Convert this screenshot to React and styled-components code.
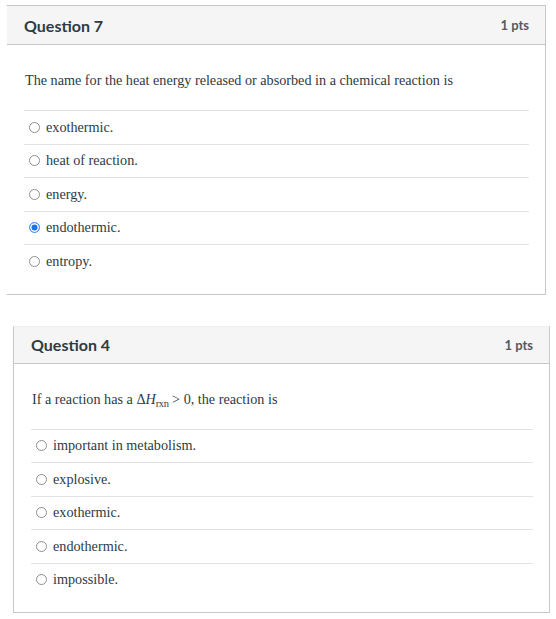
import React from 'react'
import styled, { createGlobalStyle } from 'styled-components'

const GlobalStyle = createGlobalStyle`
  body {
    margin: 0;
    background: #fff;
  }
`

const questions = [
  {
    id: 7,
    offset: 6,
    width: 540,
    headerHeight: 39,
    hideLeft: true,
    text: 'The name for the heat energy released or absorbed in a chemical reaction is',
    answers: ['exothermic.', 'heat of reaction.', 'energy.', 'endothermic.', 'entropy.'],
    selected: 3,
  },
  {
    id: 4,
    offset: 13,
    width: 537,
    headerHeight: 37,
    hideTop: true,
    formula: true,
    answers: ['important in metabolism.', 'explosive.', 'exothermic.', 'endothermic.', 'impossible.'],
    selected: -1,
  },
]

const App = () => {
  return (
    <Page>
      <GlobalStyle />
      {questions.map(q => (
        <Card key={q.id} $offset={q.offset} $width={q.width} $hideLeft={q.hideLeft} $hideTop={q.hideTop}>
          <Header $height={q.headerHeight}>
            <Title>Question {q.id}</Title>
            <Points>1 pts</Points>
          </Header>
          <Body>
            <Prompt>
              {q.formula ? (
                <>
                  If a reaction has a Δ<Italic>H</Italic><Sub>rxn</Sub> &gt; 0, the reaction is
                </>
              ) : q.text}
            </Prompt>
            <Answers>
              {q.answers.map((a, i) => (
                <Answer key={a}>
                  <Radio $checked={i === q.selected} />
                  <span>{a}</span>
                </Answer>
              ))}
            </Answers>
          </Body>
        </Card>
      ))}
    </Page>
  )
}

export default App

const Page = styled.div`
  display: flex;
  flex-direction: column;
  gap: 31px;
  padding-top: 5px;
  width: 556px;
`

const Card = styled.div`
  margin-left: ${p => p.$offset}px;
  width: ${p => p.$width}px;
  box-sizing: border-box;
  border: 1px solid #c4c8cb;
  border-left-color: ${p => (p.$hideLeft ? 'transparent' : '#c4c8cb')};
  border-top-color: ${p => (p.$hideTop ? '#eeeeee' : '#c4c8cb')};
  background: #fff;
`

const Header = styled.div`
  height: ${p => p.$height}px;
  box-sizing: border-box;
  display: flex;
  align-items: center;
  justify-content: space-between;
  padding: 0 16px 0 17px;
  background: #f5f5f5;
  border-bottom: 1px solid #c4c8cb;
`

const Title = styled.div`
  font-family: Lato, "Noto Sans", sans-serif;
  font-weight: 700;
  font-size: 16px;
  color: #2d3b45;
`

const Points = styled.div`
  font-family: Lato, "Noto Sans", sans-serif;
  font-weight: 700;
  font-size: 13px;
  color: #555a5f;
`

const Body = styled.div`
  padding: 0 16px 16px 17px;
`

const Prompt = styled.div`
  font-family: "Liberation Serif", serif;
  font-size: 14.2px;
  line-height: 16px;
  color: #2d3b45;
  padding: 27px 1px 22px;
`

const Italic = styled.i`
  font-style: italic;
`

const Sub = styled.sub`
  font-size: 10.5px;
  vertical-align: -3px;
  line-height: 0;
  letter-spacing: -0.4px;
`

const Answers = styled.div`
  display: flex;
  flex-direction: column;
`

const Answer = styled.div`
  display: flex;
  align-items: center;
  gap: 6px;
  height: 33.5px;
  box-sizing: border-box;
  border-top: 1px solid #e2e2e2;
  padding-left: 5px;
  font-family: "Liberation Serif", serif;
  font-size: 14.2px;
  color: #2d3b45;
`

const Radio = styled.span`
  width: 11px;
  height: 11px;
  box-sizing: border-box;
  border-radius: 50%;
  flex-shrink: 0;
  border: 1px solid ${p => (p.$checked ? '#4d94f0' : '#8f8f8f')};
  background: ${p => (p.$checked ? '#1a73e8' : '#fff')};
  box-shadow: ${p => (p.$checked ? 'inset 0 0 0 1.5px #fff' : 'none')};
`
